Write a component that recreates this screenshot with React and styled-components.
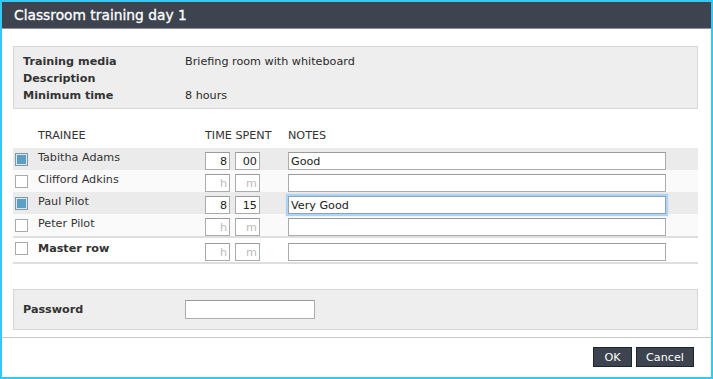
import React from "react";
import styled, { createGlobalStyle } from "styled-components";

const Global = createGlobalStyle`
  html, body { margin: 0; padding: 0; background: #ffffff; }
  body { font-family: "DejaVu Sans", "Liberation Sans", sans-serif; color: #333; }
  * { box-sizing: border-box; }
`;

const Dialog = styled.div`
  width: 713px;
  height: 379px;
  border: 2px solid #33c8f6;
  background: #fff;
  display: flex;
  flex-direction: column;
`;

const TitleBar = styled.div`
  height: 27px;
  flex: none;
  background: #3d4450;
  border-bottom: 1px solid #8c9199;
  color: #fff;
  font-size: 13.8px;
  padding-left: 12px;
  display: flex;
  align-items: center;
  -webkit-text-stroke: 0.3px #fff;
`;

const Body = styled.div`
  flex: 1;
  padding: 17px 13px 0 11px;
  font-size: 11.2px;
`;

const Panel = styled.div`
  background: #eeeeee;
  border: 1px solid #d6d6d6;
  padding: ${(p) => p.$pad};
`;

const InfoRow = styled.div`
  display: grid;
  grid-template-columns: 162px 1fr;
  height: 17px;
  line-height: 17px;
`;

const Label = styled.div`
  font-weight: bold;
  color: #333;
`;

const Value = styled.div`
  color: #2a2a2a;
`;

const Table = styled.div`
  margin-top: 16px;
`;

const Grid = styled.div`
  display: grid;
  grid-template-columns: 25px 167px 83px 378px 1fr;
  align-items: start;
`;

const Header = styled(Grid)`
  height: 23px;
  line-height: 22px;
  text-transform: uppercase;
  color: #333;
`;

const Row = styled(Grid)`
  height: ${(p) => (p.$master ? "28px" : "22px")};
  background: ${(p) => (p.$master ? "#fff" : p.$shade ? "#ebebeb" : "#fafafa")};
  border-top: ${(p) => (p.$master ? "2px solid #dedede" : "none")};
  border-bottom: ${(p) => (p.$master ? "2px solid #dedede" : "none")};
`;

const Check = styled.span`
  display: block;
  width: 13px;
  height: 13px;
  margin: ${(p) => (p.$master ? "4px" : "5px")} 0 0 2px;
  border: 1px solid ${(p) => (p.$on ? "#7e98a8" : "#aaaaaa")};
  background: ${(p) => (p.$on ? "#5e9ec3" : "#fff")};
  box-shadow: ${(p) => (p.$on ? "inset 0 0 0 1px #d8e6ee" : "none")};
`;

const Name = styled.div`
  line-height: 18px;
  font-weight: ${(p) => (p.$bold ? "bold" : "normal")};
  color: #333;
  padding-top: ${(p) => (p.$bold ? "2px" : "1px")};
`;

const Times = styled.div`
  display: flex;
  gap: 5px;
  margin-top: ${(p) => (p.$master ? "5px" : "4px")};
`;

const Field = styled.input`
  display: block;
  height: ${(p) => (p.$h ? p.$h : "18px")};
  width: ${(p) => p.$w};
  border: 1px solid #ababab;
  border-top-color: #9a9a9a;
  background: #fff;
  font-family: "DejaVu Sans", "Liberation Sans", sans-serif;
  font-size: 11.2px;
  color: #222;
  padding: 0 2px;
  text-align: ${(p) => (p.$right ? "right" : "left")};
  outline: none;
  margin: 0;
  &::placeholder { color: #bbbbbb; }
  &:focus, &[data-focus="true"] {
    border-color: #8fa4b4;
    box-shadow: 0 0 1px 2px #aed3f3;
  }
`;

const NotesCell = styled.div`
  margin-top: ${(p) => (p.$master ? "5px" : "4px")};
`;

const PasswordRow = styled.div`
  display: grid;
  grid-template-columns: 162px 1fr;
  align-items: center;
`;

const PasswordPanel = styled(Panel)`
  margin-top: 25px;
`;

const Footer = styled.div`
  flex: none;
  margin-top: 7px;
  border-top: 1px solid #c6c6c6;
  height: 40px;
  display: flex;
  justify-content: flex-end;
  align-items: flex-start;
  gap: 4px;
  padding: 9px 17px 0 0;
`;

const Button = styled.button`
  height: 20px;
  width: ${(p) => p.$w};
  background: #3d4450;
  border: 1px solid #1e242c;
  color: #fff;
  font-family: "DejaVu Sans", "Liberation Sans", sans-serif;
  font-size: 11.2px;
  padding: 0;
  cursor: pointer;
`;

const trainees = [
  { name: "Tabitha Adams", on: true, h: "8", m: "00", note: "Good" },
  { name: "Clifford Adkins", on: false, h: "", m: "", note: "" },
  { name: "Paul Pilot", on: true, h: "8", m: "15", note: "Very Good", focus: true },
  { name: "Peter Pilot", on: false, h: "", m: "", note: "" },
];

export default function App() {
  return (
    <>
      <Global />
      <Dialog>
        <TitleBar>Classroom training day 1</TitleBar>
        <Body>
          <Panel $pad="6px 8px 4px 9px">
            <InfoRow><Label>Training media</Label><Value>Briefing room with whiteboard</Value></InfoRow>
            <InfoRow><Label>Description</Label><Value></Value></InfoRow>
            <InfoRow><Label>Minimum time</Label><Value>8 hours</Value></InfoRow>
          </Panel>
          <Table>
            <Header>
              <span />
              <span>Trainee</span>
              <span>Time spent</span>
              <span>Notes</span>
              <span />
            </Header>
            {trainees.map((t, i) => (
              <Row key={t.name} $shade={i % 2 === 0}>
                <Check $on={t.on} />
                <Name>{t.name}</Name>
                <Times>
                  <Field $w="25px" $right defaultValue={t.h} placeholder="h" />
                  <Field $w="25px" $right defaultValue={t.m} placeholder="m" />
                </Times>
                <NotesCell>
                  <Field $w="378px" defaultValue={t.note} data-focus={t.focus ? "true" : "false"} />
                </NotesCell>
                <span />
              </Row>
            ))}
            <Row $master>
              <Check $master />
              <Name $bold>Master row</Name>
              <Times $master>
                <Field $w="25px" $right placeholder="h" />
                <Field $w="25px" $right placeholder="m" />
              </Times>
              <NotesCell $master>
                <Field $w="378px" />
              </NotesCell>
              <span />
            </Row>
          </Table>
          <PasswordPanel $pad="10px 8px 10px 9px">
            <PasswordRow>
              <Label>Password</Label>
              <Field type="password" $w="130px" $h="19px" />
            </PasswordRow>
          </PasswordPanel>
        </Body>
        <Footer>
          <Button $w="39px">OK</Button>
          <Button $w="58px">Cancel</Button>
        </Footer>
      </Dialog>
    </>
  );
}
